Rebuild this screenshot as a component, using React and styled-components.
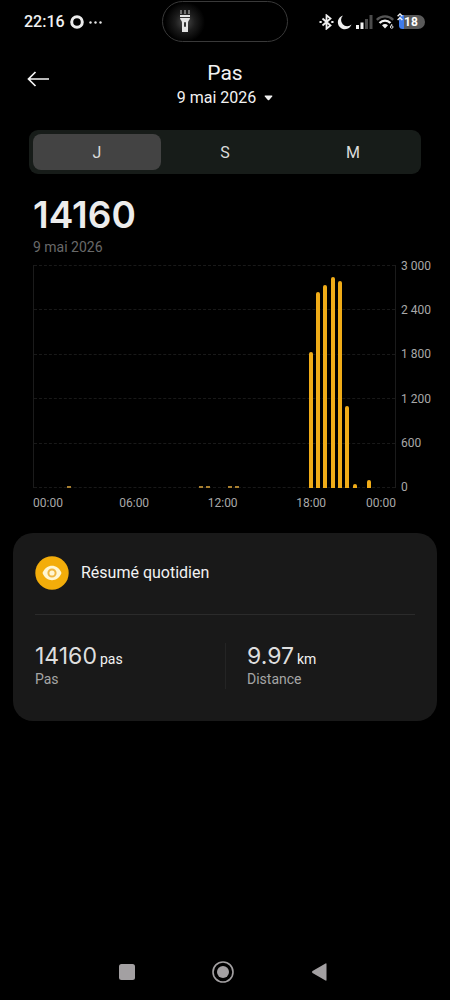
import React from "react";
import styled, { createGlobalStyle } from "styled-components";

const GlobalStyle = createGlobalStyle`
  * {
    box-sizing: border-box;
  }

  body {
    margin: 0;
    background: #000;
    color: #f2f2f2;
    font-family: Roboto, "Noto Sans", sans-serif;
  }

  button {
    padding: 0;
    border: 0;
    background: none;
    color: inherit;
    font: inherit;
    cursor: pointer;
  }

  svg {
    display: block;
    flex: none;
  }
`;

const Screen = styled.div`
  display: flex;
  flex-direction: column;
  min-height: 100vh;
`;

const StatusBar = styled.div`
  display: grid;
  grid-template-columns: 1fr 126px 1fr;
  align-items: center;
  height: 44px;
  padding: 0 25px 0 24px;
`;

const StatusLeft = styled.div`
  display: flex;
  align-items: center;
  gap: 5px;
`;

const Clock = styled.span`
  font-size: 16px;
  font-weight: 500;
  line-height: 20px;
`;

const StatusRight = styled.div`
  display: flex;
  align-items: center;
  justify-content: flex-end;
  gap: 3px;
`;

const Island = styled.div`
  display: flex;
  align-items: center;
  height: 41px;
  margin-bottom: 1px;
  border: 1px solid #393939;
  border-radius: 21px;
  background: radial-gradient(circle at 22px 20px, #4a4a4a 0, #1c1c1c 10px, #000 20px);
  padding-left: 16px;
`;

const Battery = styled.div`
  display: flex;
  align-items: center;
  justify-content: center;
  width: 26px;
  height: 14px;
  padding-right: 2px;
  border-radius: 4px 8px 8px 4px;
  background: linear-gradient(90deg, #3f7bea 5px, #5a5a5a 5px);
  color: #fff;
  font-size: 12px;
  font-weight: 700;
  line-height: 14px;
`;

const Header = styled.header`
  display: grid;
  grid-template-columns: 1fr auto 1fr;
  align-items: center;
  padding: 16px 26px 0;
`;

const BackButton = styled.button`
  justify-self: start;
  height: 24px;
  margin-bottom: 13px;
`;

const Heading = styled.div`
  display: flex;
  flex-direction: column;
  align-items: center;
`;

const Title = styled.h1`
  margin: 0;
  font-size: 21px;
  font-weight: 400;
  line-height: 26px;
`;

const DateButton = styled.button`
  display: flex;
  align-items: center;
  gap: 8px;
  font-size: 16px;
  line-height: 24px;
`;

const Tabs = styled.div`
  display: grid;
  grid-template-columns: repeat(3, 1fr);
  height: 44px;
  margin: 20px 29px 0;
  padding: 4px;
  border-radius: 9px;
  background: #171c19;
`;

const Tab = styled.button`
  border-radius: 8px;
  background: ${({ $active }) => ($active ? "#434343" : "transparent")};
  color: #dcdcdc;
  font-size: 16px;
`;

const Summary = styled.section`
  padding: 20px 33px 0;
`;

const Total = styled.div`
  color: #ececec;
  font-family: Inter, sans-serif;
  font-size: 37px;
  font-weight: 600;
  line-height: 42px;
`;

const TotalDate = styled.div`
  color: #696969;
  font-size: 14px;
  line-height: 22px;
`;

const Chart = styled.section`
  display: grid;
  grid-template-columns: 1fr 54px;
  color: #a8a8a8;
  font-size: 12px;
  line-height: 16px;
  padding-left: 33px;
`;

const Plot = styled.div`
  display: grid;
  height: 223px;
  margin: 7px 0;
  border: solid #1b1b1b;
  border-width: 0 1px;
`;

const GridLines = styled.div`
  grid-area: 1 / 1;
  display: flex;
  flex-direction: column;
  justify-content: space-between;
`;

const GridLine = styled.div`
  border-top: 1px dashed #191919;
`;

const slots = "9px repeat(48, minmax(0, 1fr))";

const Bars = styled.div`
  grid-area: 1 / 1;
  display: grid;
  grid-template-columns: ${slots};
  align-items: end;
`;

const Bar = styled.div`
  grid-column: ${({ $slot }) => $slot + 2};
  grid-row: 1;
  justify-self: center;
  width: 4px;
  min-height: 2px;
  border-radius: ${({ $dim }) => ($dim ? "0" : "2px 2px 0 0")};
  background: ${({ $dim }) => ($dim ? "#a87f30" : "#f0ac18")};
`;

const YAxis = styled.div`
  display: flex;
  flex-direction: column;
  justify-content: space-between;
  padding-left: 5px;
`;

const XAxis = styled.div`
  display: grid;
  grid-template-columns: ${slots};
`;

const XLabel = styled.span`
  grid-column: ${({ $span }) => $span};
  grid-row: 1;
  justify-self: ${({ $align }) => $align || "center"};
`;

const Card = styled.section`
  margin: 22px 13px 0;
  padding: 23px 22px 32px;
  border-radius: 20px;
  background: #191919;
`;

const CardHeader = styled.div`
  display: flex;
  align-items: center;
  gap: 12px;
  padding-bottom: 24px;
  border-bottom: 1px solid #2b2b2b;
`;

const CardTitle = styled.h2`
  margin: 0;
  font-size: 16px;
  font-weight: 400;
  line-height: 24px;
`;

const Stats = styled.div`
  display: grid;
  grid-template-columns: 1fr 1fr;
  padding-top: 28px;
`;

const Stat = styled.div`
  display: flex;
  flex-direction: column;
`;

const SecondStat = styled(Stat)`
  padding-left: 21px;
  border-left: 1px solid #242424;
`;

const StatValue = styled.div`
  display: flex;
  align-items: baseline;
  gap: 3px;
  height: 26px;
  color: #dedede;
  font-family: Inter, sans-serif;
  font-size: 23px;
  line-height: 26px;
`;

const Unit = styled.span`
  color: #f2f2f2;
  font-family: Roboto, sans-serif;
  font-size: 14px;
`;

const StatLabel = styled.div`
  color: #a5a5a5;
  font-size: 14px;
  line-height: 20px;
`;

const NavBar = styled.nav`
  display: flex;
  justify-content: center;
  gap: 48px;
  margin-top: auto;
  padding: 0 4px 4px 0;
`;

const NavButton = styled.button`
  display: flex;
  align-items: center;
  justify-content: center;
  width: 48px;
  height: 48px;
`;

const MAX_STEPS = 3000;
const yTicks = ["3 000", "2 400", "1 800", "1 200", "600", "0"];

// one slot per half hour
const steps = [
  { slot: 3, value: 18 },
  { slot: 21, value: 18 },
  { slot: 22, value: 20 },
  { slot: 25, value: 14 },
  { slot: 26, value: 14 },
  { slot: 36, value: 1836 },
  { slot: 37, value: 2635 },
  { slot: 38, value: 2730 },
  { slot: 39, value: 2840 },
  { slot: 40, value: 2785 },
  { slot: 41, value: 1105 },
  { slot: 42, value: 50 },
  { slot: 44, value: 108 },
];

const xTicks = [
  { label: "00:00", span: "1 / 10", align: "start" },
  { label: "06:00", span: "11 / 18" },
  { label: "12:00", span: "23 / 30" },
  { label: "18:00", span: "35 / 42" },
  { label: "00:00", span: "43 / 50", align: "end" },
];

const FlashlightIcon = () => (
  <svg width="12" height="24" viewBox="0 0 12 24" fill="#e4e4e4">
    <path d="M2 0v4M6 0v4M10 0v4" stroke="#c4c4c4" strokeWidth="1" />
    <path d="M1 5h10v2H1zM1 8h10c0 2-2 2.500-2 4.500V22H3v-9.500C3 10.500 1 10 1 8z" />
    <rect x="5" y="12" width="2" height="5" rx="1" fill="#333" />
  </svg>
);

const StatusIcons = () => (
  <>
    <svg width="15" height="16" viewBox="0 0 15 16" fill="none" stroke="#f0f0f0" strokeWidth="1.800">
      <path d="M3.500 4.500l8 7-4 3.200V1.300l4 3.200-8 7" />
      <path d="M.5 8h2.200M12.300 8h2.200" strokeWidth="2.200" />
    </svg>
    <svg width="15" height="15" viewBox="0 0 15 15" fill="#efefef">
      <path d="M6 .5A7 7 0 1 0 14.500 9.500 6 6 0 0 1 6 .5z" />
    </svg>
    <svg width="18" height="14" viewBox="0 0 18 14">
      <path d="M1 10h3v4H1zM5.500 7.500h3V14h-3z" fill="#f2f2f2" />
      <path d="M10 4h3v10h-3zM14.500 0h3v14h-3z" fill="#4b4b4b" />
    </svg>
    <svg width="18" height="14" viewBox="0 0 18 14" fill="none">
      <path d="M.8 4.800C5.500.3 12.500.3 17.200 4.800" stroke="#555" strokeWidth="2.300" />
      <path d="M3.500 8c3.300-3.300 7.700-3.300 11 0" stroke="#f2f2f2" strokeWidth="2.300" />
      <path d="M6 10.200c2-1.700 4-1.700 6 0l-3 3.300z" fill="#f2f2f2" />
      <path d="M16 9l-1.300 2.500" stroke="#ddd" />
      <circle cx="15.700" cy="12" r="1.300" stroke="#ddd" />
    </svg>
  </>
);

// charging arrows overlap the battery's top left corner
const BatteryArrows = styled.svg`
  align-self: flex-start;
  margin: -1px -7px 0 0;
  z-index: 1;
`;

const EyeIcon = () => (
  <svg width="34" height="34" viewBox="0 0 34 34">
    <circle cx="17" cy="17" r="16.700" fill="#f3ad0a" />
    <path d="M7.500 17c4-9.600 15-9.600 19 0-4 9.600-15 9.600-19 0z" fill="#fff6d2" />
    <circle cx="17" cy="17" r="3.600" fill="#fff6d2" stroke="#efb63f" strokeWidth="2" />
  </svg>
);

const Status = () => (
  <StatusBar>
    <StatusLeft>
      <Clock>22:16</Clock>
      <svg width="14" height="14" viewBox="0 0 14 14" fill="none">
        <circle cx="7" cy="7" r="5.300" stroke="#ececec" strokeWidth="3" />
      </svg>
      <svg width="13" height="3" viewBox="0 0 13 3" fill="#e6e6e6">
        <circle cx="1.500" cy="1.500" r="1.200" />
        <circle cx="6.500" cy="1.500" r="1.200" />
        <circle cx="11.500" cy="1.500" r="1.200" />
      </svg>
    </StatusLeft>
    <Island>
      <FlashlightIcon />
    </Island>
    <StatusRight>
      <StatusIcons />
      <BatteryArrows width="6" height="8" viewBox="0 0 6 8" fill="none" stroke="#f0f0f0" strokeWidth="1.400">
        <path d="M.6 3.300L3 1l2.400 2.300M.6 7L3 4.700 5.400 7" />
      </BatteryArrows>
      <Battery>18</Battery>
    </StatusRight>
  </StatusBar>
);

const StepsChart = () => (
  <Chart>
    <Plot>
      <GridLines>
        {yTicks.map((tick) => (
          <GridLine key={tick} />
        ))}
      </GridLines>
      <Bars>
        {steps.map(({ slot, value }) => (
          <Bar
            key={slot}
            $slot={slot}
            $dim={value < 30}
            style={{ height: `${(value / MAX_STEPS) * 100}%` }}
          />
        ))}
      </Bars>
    </Plot>
    <YAxis>
      {yTicks.map((tick) => (
        <span key={tick}>{tick}</span>
      ))}
    </YAxis>
    <XAxis>
      {xTicks.map(({ label, span, align }) => (
        <XLabel key={span} $span={span} $align={align}>
          {label}
        </XLabel>
      ))}
    </XAxis>
  </Chart>
);

const DailySummary = () => (
  <Card>
    <CardHeader>
      <EyeIcon />
      <CardTitle>Résumé quotidien</CardTitle>
    </CardHeader>
    <Stats>
      <Stat>
        <StatValue>
          14160<Unit>pas</Unit>
        </StatValue>
        <StatLabel>Pas</StatLabel>
      </Stat>
      <SecondStat>
        <StatValue>
          9.97<Unit>km</Unit>
        </StatValue>
        <StatLabel>Distance</StatLabel>
      </SecondStat>
    </Stats>
  </Card>
);

const App = () => {
  const [period, setPeriod] = React.useState("J");

  return (
    <Screen>
      <GlobalStyle />
      <Status />
      <Header>
        <BackButton aria-label="Retour">
          <svg width="24" height="24" viewBox="0 0 24 24" fill="none" stroke="#f5f5f5" strokeWidth="1.700">
            <path d="M9.500 5L2.500 12 9.500 19M2.500 12H23" />
          </svg>
        </BackButton>
        <Heading>
          <Title>Pas</Title>
          <DateButton>
            9 mai 2026
            <svg width="9" height="6" viewBox="0 0 9 6" fill="#f0f0f0">
              <path d="M1.200.5h6.600q1 .2.400 1L5.200 5q-.7.700-1.400 0L.8 1.500q-.6-.8.400-1z" />
            </svg>
          </DateButton>
        </Heading>
      </Header>
      <Tabs role="tablist">
        {["J", "S", "M"].map((name) => (
          <Tab
            key={name}
            role="tab"
            aria-selected={period === name}
            $active={period === name}
            onClick={() => setPeriod(name)}
          >
            {name}
          </Tab>
        ))}
      </Tabs>
      <Summary>
        <Total>14160</Total>
        <TotalDate>9 mai 2026</TotalDate>
      </Summary>
      <StepsChart />
      <DailySummary />
      <NavBar>
        <NavButton aria-label="Applications récentes">
          <svg width="16" height="16" viewBox="0 0 16 16" fill="#a3a0a2">
            <rect width="16" height="16" rx="2.500" />
          </svg>
        </NavButton>
        <NavButton aria-label="Accueil">
          <svg width="22" height="22" viewBox="0 0 22 22">
            <circle cx="11" cy="11" r="10" fill="none" stroke="#a3a0a2" strokeWidth="1.600" />
            <circle cx="11" cy="11" r="6" fill="#a3a0a2" />
          </svg>
        </NavButton>
        <NavButton aria-label="Précédent">
          <svg width="16" height="18" viewBox="0 0 16 18" fill="#a3a0a2">
            <path d="M15.500 1v16q0 1-1 .5L1.500 10q-1.200-1 0-2L14.500.5q1-.5 1 .5z" />
          </svg>
        </NavButton>
      </NavBar>
    </Screen>
  );
};

export default App;
